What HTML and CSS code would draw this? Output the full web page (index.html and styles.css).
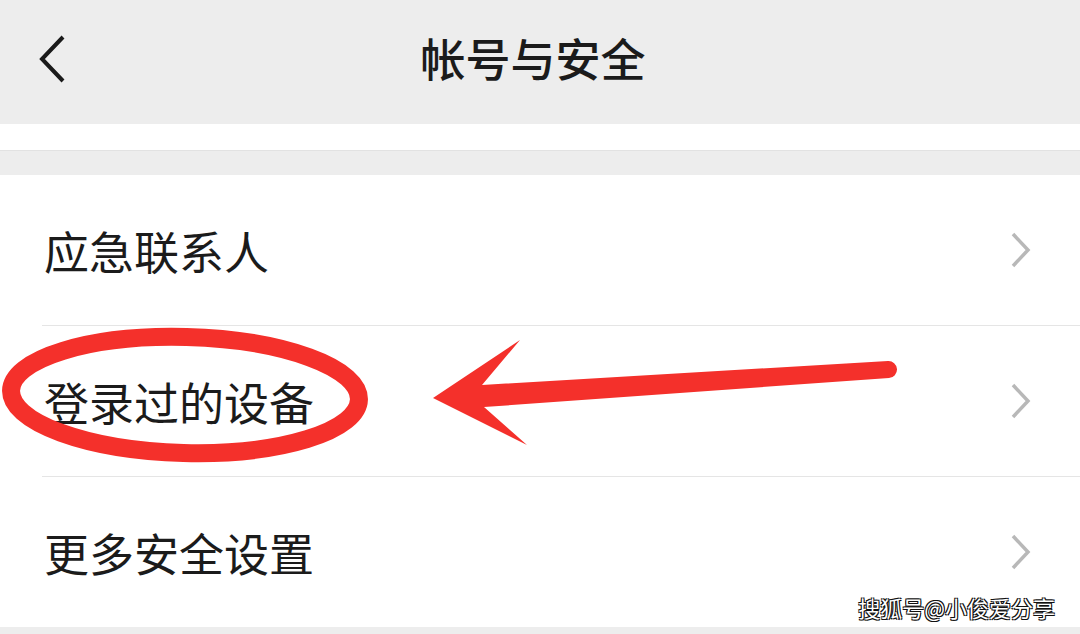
FILE: index.html
```html
<!DOCTYPE html>
<html lang="zh-CN">
<head>
    <meta charset="UTF-8">
    <meta name="viewport" content="width=device-width, initial-scale=1.0">
    <title>帐号与安全</title>
    <link rel="stylesheet" href="styles.css">
</head>
<body>

    <div class="page">

        <!-- top bar -->
        <header class="nav-bar">
            <span class="nav-back">
                <svg width="30" height="52" viewBox="0 0 30 52">
                    <polyline points="24,3 3,25 24,47" fill="none" stroke="#1a1a1a" stroke-width="4"/>
                </svg>
            </span>
            <h1 class="nav-title">帐号与安全</h1>
        </header>

        <div class="top-strip"></div>

        <!-- settings list -->
        <ul class="menu">
            <li class="menu-item">
                <span class="menu-label">应急联系人</span>
                <svg class="menu-arrow" width="22" height="36" viewBox="0 0 22 36">
                    <polyline points="3,2 18,18 3,34" fill="none" stroke="#b8b8b8" stroke-width="3.5"/>
                </svg>
            </li>
            <li class="menu-item">
                <span class="menu-label">登录过的设备</span>
                <svg class="menu-arrow" width="22" height="36" viewBox="0 0 22 36">
                    <polyline points="3,2 18,18 3,34" fill="none" stroke="#b8b8b8" stroke-width="3.5"/>
                </svg>
            </li>
            <li class="menu-item">
                <span class="menu-label">更多安全设置</span>
                <svg class="menu-arrow" width="22" height="36" viewBox="0 0 22 36">
                    <polyline points="3,2 18,18 3,34" fill="none" stroke="#b8b8b8" stroke-width="3.5"/>
                </svg>
            </li>
        </ul>

        <!-- red marks drawn over the screenshot -->
        <svg class="marks" width="1080" height="634" viewBox="0 0 1080 634">
            <ellipse cx="185" cy="395" rx="174" ry="58" transform="rotate(1.5 185 395)" fill="none" stroke="#f4302b" stroke-width="18"/>
            <path d="M433 398 L520 340 L482 385 L888 361 A8.5 8.5 0 0 1 889 378 L484 407 L527 445 Z" fill="#f4302b"/>
        </svg>

        <div class="watermark">搜狐号@小俊爱分享</div>
    </div>

</body>
</html>
```

FILE: styles.css
```css
body {
    margin: 0;
    padding: 0;
    background-color: #ededed;
    font-family: "Noto Sans CJK SC", "Noto Sans", sans-serif;
    color: #1b1b1b;
}

.page {
    position: relative;
    width: 1080px;
    height: 634px;
    overflow: hidden;
    background-color: #ededed;
}


.nav-bar {
    height: 124px;
    display: flex;
    align-items: center;
    justify-content: center;
    position: relative;
}

.nav-back {
    position: absolute;
    left: 39px;
    top: 34px;
    display: flex;
}

.nav-title {
    margin: 0 0 10px -14px;
    font-size: 45px;
    font-weight: 500;
    line-height: 1;
    color: #1b1b1b;
}


.top-strip {
    height: 26px;
    background-color: #fff;
    border-bottom: 1px solid #e2e2e2;
    margin-bottom: 24px;
}


.menu {
    list-style: none;
    margin: 0;
    padding: 0;
    background-color: #fff;
}

.menu-item {
    height: 150px;
    display: flex;
    align-items: center;
    justify-content: space-between;
    margin-left: 42px;
    padding-right: 48px;
    border-bottom: 1px solid #e5e5e5;
}

.menu-item:last-child {
    border-bottom: none;
}

.menu-label {
    margin-left: 2px;
    font-size: 45px;
    line-height: 1;
    color: #1b1b1b;
}

.menu-arrow {
    display: block;
}


.marks {
    position: absolute;
    left: 0;
    top: 0;
}

.watermark {
    position: absolute;
    right: 25px;
    top: 596px;
    font-size: 22px;
    line-height: 1;
    color: #fff;
    text-shadow: -1px -1px 0 #111, 1px -1px 0 #111, -1px 1px 0 #111, 1px 1px 0 #111;
}
```
